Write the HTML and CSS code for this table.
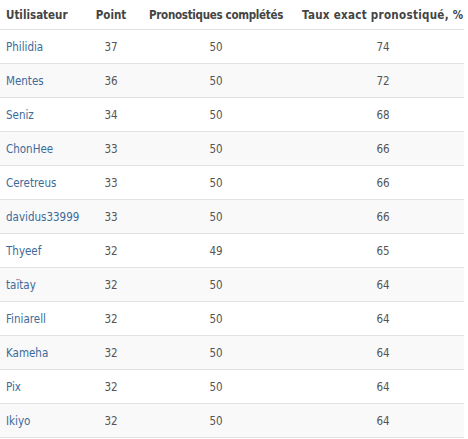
FILE: index.html
```html
<!DOCTYPE html>
<html>
<head>
<meta charset="utf-8">
<link rel="stylesheet" href="styles.css">
</head>
<body>
<table class="rank">
  <colgroup>
    <col class="c-user"><col class="c-point"><col class="c-done"><col class="c-rate">
  </colgroup>
  <thead>
    <tr>
      <th class="user">Utilisateur</th>
      <th>Point</th>
      <th class="done">Pronostiques complétés</th>
      <th class="rate">Taux exact pronostiqué, %</th>
    </tr>
  </thead>
  <tbody>
    <tr><td class="user"><a href="#">Philidia</a></td><td>37</td><td>50</td><td>74</td></tr>
    <tr><td class="user"><a href="#">Mentes</a></td><td>36</td><td>50</td><td>72</td></tr>
    <tr><td class="user"><a href="#">Seniz</a></td><td>34</td><td>50</td><td>68</td></tr>
    <tr><td class="user"><a href="#">ChonHee</a></td><td>33</td><td>50</td><td>66</td></tr>
    <tr><td class="user"><a href="#">Ceretreus</a></td><td>33</td><td>50</td><td>66</td></tr>
    <tr><td class="user"><a href="#">davidus33999</a></td><td>33</td><td>50</td><td>66</td></tr>
    <tr><td class="user"><a href="#">Thyeef</a></td><td>32</td><td>49</td><td>65</td></tr>
    <tr><td class="user"><a href="#">taïtay</a></td><td>32</td><td>50</td><td>64</td></tr>
    <tr><td class="user"><a href="#">Finiarell</a></td><td>32</td><td>50</td><td>64</td></tr>
    <tr><td class="user"><a href="#">Kameha</a></td><td>32</td><td>50</td><td>64</td></tr>
    <tr><td class="user"><a href="#">Pix</a></td><td>32</td><td>50</td><td>64</td></tr>
    <tr><td class="user"><a href="#">Ikiyo</a></td><td>32</td><td>50</td><td>64</td></tr>
  </tbody>
</table>
</body>
</html>
```
FILE: styles.css
```css
html, body {
  margin: 0;
  padding: 0;
  background: #fff;
  overflow: hidden;
}
.rank {
  width: 464px;
  table-layout: fixed;
  border-collapse: collapse;
  font-family: "DejaVu Sans Condensed", "DejaVu Sans", sans-serif;
  font-size: 11.5px;
  color: #555;
}
.c-user { width: 92px; }
.c-point { width: 38px; }
.c-done { width: 172px; }
.c-rate { width: 162px; }
.rank th {
  height: 29px;
  padding: 0;
  font-weight: bold;
  color: #444;
  text-align: center;
  white-space: nowrap;
  border-bottom: 1px solid #e2e2e2;
  vertical-align: middle;
}
.rank th.done { letter-spacing: -0.3px; }
.rank th.rate { text-align: left; letter-spacing: 0.3px; }
.rank td {
  height: 33px;
  padding: 0;
  text-align: center;
  border-bottom: 1px solid #e2e2e2;
  vertical-align: middle;
}
.rank .user {
  text-align: left;
  padding-left: 6px;
}
.rank tbody tr:nth-child(even) td { background: #f9f9f9; }
.rank a {
  color: #3d6a99;
  text-decoration: none;
}
```
